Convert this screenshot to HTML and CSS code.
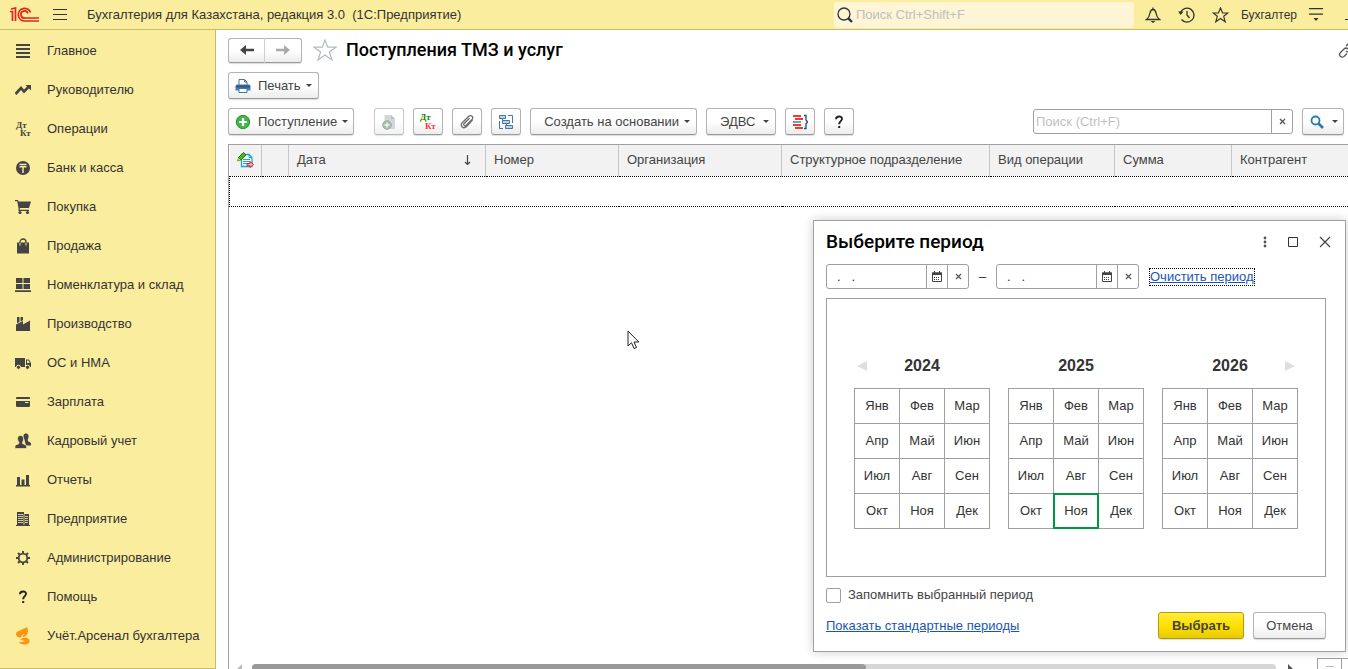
FILE: index.html
```html
<!DOCTYPE html>
<html lang="ru">
<head>
<meta charset="utf-8">
<title>Бухгалтерия для Казахстана</title>
<link rel="stylesheet" href="styles.css">
</head>
<body>
<div class="app">
  <header class="topbar">
    <svg class="logo" width="30" height="16" viewBox="0 0 30 16" fill="none" stroke="#e0241e" stroke-width="1.700"><path d="M0 4.500H2.500V14M1 2L5.500 1V14"/><path d="M20.500 5.500A6.300 6.300 0 1 0 15 14H29"/><path d="M17.800 6.500A3.500 3.500 0 1 0 15 11H29"/></svg>
    <button class="flat" aria-label="Меню"><svg width="14" height="12" viewBox="0 0 14 12" stroke="#333" stroke-width="1"><path d="M0 .5H14M0 5.500H14M0 10.500H14"/></svg></button>
    <div class="app-title">Бухгалтерия для Казахстана, редакция 3.0&nbsp; (1С:Предприятие)</div>
    <label class="global-search">
      <svg width="16" height="16" viewBox="0 0 16 16" fill="none" stroke="#333"><circle cx="7" cy="7" r="6" stroke-width="1.300"/><path d="M11.300 11.300L15 15" stroke-width="2.400"/></svg>
      <input type="text" placeholder="Поиск Ctrl+Shift+F" aria-label="Поиск">
    </label>
    <div class="top-tools">
      <button class="flat" aria-label="Уведомления"><svg width="16" height="16" viewBox="0 0 16 16" fill="none" stroke="#333" stroke-width="1.300"><path d="M1.500 12.500C4 10.500 4.500 9 5 6C5.500 3.500 6.500 2.500 8 2.500S10.500 3.500 11 6C11.500 9 12 10.500 14.500 12.500Z"/><path d="M8 .5V2.500"/><path d="M5.500 14H10.500L8 16Z" fill="#333" stroke="none"/></svg></button>
      <button class="flat" aria-label="История"><svg width="17" height="16" viewBox="0 0 17 16" fill="none" stroke="#333" stroke-width="1.300"><path d="M2.700 5A7 7 0 1 1 3.500 12.500"/><path d="M9 4V8L11.500 11"/><path d="M0 4.500H5.500L2.700 8Z" fill="#333" stroke="none"/></svg></button>
      <button class="flat" aria-label="Избранное"><svg width="17" height="16" viewBox="0 0 17 16" fill="none" stroke="#333" stroke-width="1.200"><path d="M8.500 1L10.600 6H15.800L11.700 9.300L13.200 14.800L8.500 11.600L3.800 14.800L5.300 9.300L1.200 6H6.400Z"/></svg></button>
      <button class="flat user">Бухгалтер</button>
      <button class="flat" aria-label="Настройки"><svg width="14" height="13" viewBox="0 0 14 13" fill="#333"><path d="M0 0H14V1.200H0ZM0 5.500H14V6.700H0ZM4.500 10H9.500L7 13Z"/></svg></button>
      <button class="flat minimize" aria-label="Свернуть"><svg width="12" height="12" viewBox="0 0 12 12"><path d="M0 10.500H12" stroke="#333"/></svg></button>
    </div>
  </header>

  <nav class="sidebar">
    <a class="nav-item" href="#"><svg viewBox="0 0 16 16"><path d="M1 1h14v2H1zM1 5h14v2H1zM1 9h14v2H1zM1 13h14v2H1z"/></svg>Главное</a>
    <a class="nav-item" href="#"><svg viewBox="0 0 16 16"><path d="M.5 12L6 6L9 9.500L14 4.500" fill="none" stroke="#444" stroke-width="2.600"/><path d="M10.500 3H16V8.500Z"/></svg>Руководителю</a>
    <a class="nav-item" href="#"><svg viewBox="0 0 16 16"><text x="1" y="7" font-size="9">Дт</text><text x="5" y="15" font-size="9">Кт</text></svg>Операции</a>
    <a class="nav-item" href="#"><svg viewBox="0 0 16 16"><circle cx="8" cy="8" r="7"/><path d="M4.500 4.500H11.500M4.500 6.800H11.500M8 6.500V13" stroke="#fbed9e" stroke-width="1.400"/></svg>Банк и касса</a>
    <a class="nav-item" href="#"><svg viewBox="0 0 16 16"><path d="M0 1H3L3.600 2.500H16L14 9H4.800V10.800H14V12H3.500V9L2.200 2.300H0Z"/><circle cx="5" cy="13.500" r="1.600"/><circle cx="12.500" cy="13.500" r="1.600"/></svg>Покупка</a>
    <a class="nav-item" href="#"><svg viewBox="0 0 16 16"><path d="M2 4.500H14V15.500H2Z"/><path d="M5 7V4A3 3 0 0 1 11 4V7" fill="none" stroke="#444" stroke-width="1.300"/><path d="M5 5V7.500M11 5V7.500" stroke="#fbed9e"/></svg>Продажа</a>
    <a class="nav-item" href="#"><svg viewBox="0 0 16 16"><path d="M1 1H7.500V6H1ZM8.500 1H15V6H8.500ZM1 7H7.500V12H1ZM8.500 7H15V12H8.500ZM0 13.200H16V15H0Z"/></svg>Номенклатура и склад</a>
    <a class="nav-item" href="#"><svg viewBox="0 0 16 16"><path d="M1 15V8.500L8 5V8.500L15 4.500V15ZM2 1H4.500V6L2 7.200ZM5.500 1H8V4.200L5.500 5.500Z"/></svg>Производство</a>
    <a class="nav-item" href="#"><svg viewBox="0 0 16 16"><path d="M0 3H10V12H0ZM11 4.500H14L16 8V12H11Z"/><path d="M12 5.500H13.500L14.800 8H12Z" fill="#fbed9e"/><g stroke="#fbed9e"><circle cx="3.500" cy="12.300" r="2.100"/><circle cx="12.500" cy="12.300" r="2.100"/></g></svg>ОС и НМА</a>
    <a class="nav-item" href="#"><svg viewBox="0 0 16 16"><path d="M1 4A1 1 0 0 1 2 3H14A1 1 0 0 1 15 4V5H1ZM1 7H15V12A1 1 0 0 1 14 13H2A1 1 0 0 1 1 12Z"/><path d="M10 8.500H13.500" stroke="#fbed9e"/></svg>Зарплата</a>
    <a class="nav-item" href="#"><svg viewBox="0 0 16 16"><path d="M10 9L9.500 6.500C7.500 3 8.500 .5 11 .5S14.500 3 12.800 6.500V8L16 10V12.500H11Z"/><path d="M0 15.500V12.500L4 10.500V9.500C1.500 6 2.500 2.500 5.500 2.500S9.500 6 7.500 9.500V10.500L11.500 12.500V15.500Z" stroke="#fbed9e" stroke-width=".7"/></svg>Кадровый учет</a>
    <a class="nav-item" href="#"><svg viewBox="0 0 16 16"><path d="M1 13H15V14.500H1ZM2 5H5V13H2ZM6.500 7.500H9.500V13H6.500ZM11 3H14V13H11Z"/></svg>Отчеты</a>
    <a class="nav-item" href="#"><svg viewBox="0 0 16 16"><path d="M2 1H9V3H14V14H15V15H1V14H2Z"/><path d="M3 3.500H8M3 5.500H8M3 7.500H8M3 9.500H8M3 11.500H8M10 5.500H13M10 7.500H13M10 9.500H13M10 11.500H13M9 3V14" stroke="#fbed9e" stroke-width=".8"/></svg>Предприятие</a>
    <a class="nav-item" href="#"><svg viewBox="0 0 16 16" fill="none" stroke="#444"><circle cx="8" cy="8" r="4.300" stroke-width="1.800"/><path d="M8 1V4M8 12V15M1 8H4M12 8H15M3 3L5 5M11 11L13 13M13 3L11 5M5 11L3 13" stroke-width="1.900"/></svg>Администрирование</a>
    <a class="nav-item" href="#"><svg viewBox="0 0 16 16" fill="none"><path d="M5 5.200C5 1.500 11.200 1.700 11 5C10.800 7.200 8.200 7.300 8.200 10.200" stroke="#222" stroke-width="1.900"/><path d="M7.200 12H9.200V14H7.200Z" fill="#222"/></svg>Помощь</a>
    <a class="nav-item" href="#"><svg class="leaf" viewBox="0 0 16 18"><path d="M12 0C13.500 3 13.500 7 10.500 9L7.500 10.500C7.500 9 8.500 8 9.500 6.500C7.500 7.500 6.500 9 6 10.500C3 10.500 .8 9 1 6.500C1.500 3.500 8 3 12 0Z"/><path d="M5.500 12.300C7.500 10.500 12 10 13.800 12C16 15 13 18 9 17.500C6.500 17.300 4.500 16.500 3.500 14.800C6 15.500 8.500 15.200 10.500 13.800C8.500 13.800 6.500 13.500 5.500 12.300Z"/></svg>Учёт.Арсенал бухгалтера</a>
  </nav>

  <main class="main">
    <div class="title-row">
      <div class="history">
        <button class="btn" aria-label="Назад"><svg width="16" height="12" viewBox="0 0 16 12" fill="#444"><path d="M1 6L7 1V4.700H15V7.300H7V11Z"/></svg></button>
        <button class="btn" aria-label="Вперед"><svg width="16" height="12" viewBox="0 0 16 12" fill="#aaa"><path d="M15 6L9 1V4.700H1V7.300H9V11Z"/></svg></button>
      </div>
      <button class="flat" aria-label="В избранное"><svg width="24" height="22" viewBox="0 0 24 22" fill="none" stroke="#b3bac4" stroke-width="1.200"><path d="M12 1L14.700 8.200H23L16.400 13L19 21L12 16L5 21L7.600 13L1 8.200H9.300Z"/></svg></button>
      <h1>Поступления ТМЗ и услуг</h1>
      <button class="flat link-btn" aria-label="Ссылка"><svg width="18" height="18" viewBox="0 0 18 18" fill="none" stroke="#555" stroke-width="1.300"><path d="M8 5L11 2C14 0 17 3 15.500 6L12 10C10.500 11 9 11 8 10M10 8C8.500 6.500 7 7 6 8L2.500 11.500C0 14 3 17.500 6 15.500L9 12.500"/></svg></button>
    </div>
    <div class="print-row">
      <button class="btn"><svg width="16" height="16" viewBox="0 0 16 16"><path d="M1.500 6.500H14.500L15.500 8V12.500H.500V8Z" fill="#4a7fae"/><path d="M4 7V1.500H9.500L12 4V7Z" fill="#fff" stroke="#46749e"/><path d="M9.500 1.500V4H12" fill="none" stroke="#46749e"/><path d="M1 7.500H15V9.500H1Z" fill="#2e5780"/><path d="M4 10.500H12V14.500H4Z" fill="#fff" stroke="#46749e"/></svg>Печать<span class="caret"></span></button>
    </div>
    <div class="toolbar">
      <button class="btn add"><svg width="16" height="16" viewBox="0 0 16 16"><circle cx="8" cy="8" r="6.700" fill="#43b649" stroke="#299134"/><path d="M8 4V12M4 8H12" stroke="#fff" stroke-width="2.200"/></svg>Поступление<span class="caret"></span></button>
      <button class="btn icon" disabled aria-label="Скопировать"><svg width="16" height="16" viewBox="0 0 16 16"><path d="M3.500 1H10L14 5V15H3.500Z" fill="#bfc7cd"/><path d="M10 1V5H14Z" fill="#98a3ad"/><circle cx="6" cy="11" r="4.300" fill="#84a388" stroke="#6f9173"/><path d="M6 8.500V13.500M3.500 11H8.500" stroke="#eee" stroke-width="1.400"/></svg></button>
      <button class="btn icon" aria-label="Проводки"><svg class="dtkt" width="18" height="18" viewBox="0 0 18 18"><text x="1" y="7" fill="#238000">Дт</text><text x="6" y="16" fill="#f33">Кт</text></svg></button>
      <button class="btn icon" aria-label="Присоединенные файлы"><svg width="16" height="16" viewBox="0 0 16 16" fill="none" stroke="#6b6b6b" stroke-width="1.300"><path d="M13.500 6L7.500 12.500C4.500 15.500 .5 12 3 9L9.500 2.500C12 .2 15.300 3 13 5.500L7 11.500C5.700 12.500 4 11 5 9.700L10.500 4.300"/></svg></button>
      <button class="btn icon" aria-label="Структура подчиненности"><svg width="16" height="16" viewBox="0 0 16 16" fill="#b9d3e7" stroke="#44789f"><path d="M1.500 1.500H7.500V4.500H1.500ZM4.500 6.500H11.500V9.500H4.500ZM7.500 11.500H14.500V14.500H7.500Z"/><path d="M10 1.500H14.500V9M4.500 4.500V6.500M8.500 9.500V11.500M1.500 7V14.500H5" fill="none"/></svg></button>
      <button class="btn based">Создать на основании<span class="caret"></span></button>
      <button class="btn edvs">ЭДВС<span class="caret"></span></button>
      <button class="btn icon" aria-label="Дополнительные реквизиты"><svg width="16" height="16" viewBox="0 0 16 16"><path d="M1 1H9V3H1ZM3 4H11V6H3ZM1 10H9V12H1ZM3 13H11V15H3Z" fill="#f23b2c"/><path d="M1 7H9V9H1Z" fill="#5fa7cf"/><path d="M12 1.500H14V6L15.500 8L14 10V14.500H12" fill="none" stroke="#1b4f80" stroke-width="1.300"/></svg></button>
      <button class="btn icon" aria-label="Справка"><svg width="16" height="16" viewBox="0 0 16 16" fill="none"><path d="M5 5.200C5 1.500 11.200 1.700 11 5C10.800 7.200 8.200 7.300 8.200 10.200" stroke="#222" stroke-width="1.900"/><path d="M7.200 12H9.200V14H7.200Z" fill="#222"/></svg></button>
      <div class="field list-search">
        <input type="text" placeholder="Поиск (Ctrl+F)" aria-label="Поиск в списке">
        <button aria-label="Очистить"><svg width="7" height="7" viewBox="0 0 7 7" stroke="#555" stroke-width="1.300"><path d="M1 1L6 6M6 1L1 6"/></svg></button>
      </div>
      <button class="btn find" aria-label="Найти"><svg width="14" height="14" viewBox="0 0 14 14" fill="none" stroke="#2e7ab0"><circle cx="5.500" cy="5.500" r="4" stroke-width="1.800"/><path d="M8.500 8.500L13 13" stroke-width="2.600"/></svg><span class="caret"></span></button>
    </div>

    <div class="list">
      <table>
        <colgroup><col class="c-mark"><col class="c-flag"><col class="c-date"><col class="c-num"><col class="c-org"><col class="c-dep"><col class="c-kind"><col class="c-sum"><col></colgroup>
        <thead>
          <tr>
            <th><svg width="18" height="16" viewBox="0 0 18 16"><path d="M4.500 2.500H12L15 5.500V14.500H4.500Z" fill="#fff" stroke="#19a5d8" stroke-width="1.300"/><path d="M12 2.500V5.500H15M6 7.500H13M6 9.500H13M6 11.500H10" fill="none" stroke="#19a5d8"/><path d="M1.500 5.500L6.500 .5L9 3L4 8Z" fill="#52b51e" stroke="#147a08"/><path d="M1.500 5.500L4 8L.5 9Z" fill="#ffe04a" stroke="#147a08" stroke-width=".6"/><path d="M10 11.500H13V9.500L16.500 12.500L13 15.500V13.700H10Z" fill="#ffb0b8" stroke="#e02032"/></svg></th>
            <th></th>
            <th><div class="sorted">Дата<svg width="7" height="11" viewBox="0 0 7 11" fill="none" stroke="#444"><path d="M3.500 0V9.500M1 7L3.500 9.500L6 7" stroke-width="1.200"/></svg></div></th>
            <th>Номер</th><th>Организация</th><th>Структурное подразделение</th><th>Вид операции</th><th>Сумма</th><th>Контрагент</th>
          </tr>
        </thead>
        <tbody><tr><td colspan="9"></td></tr></tbody>
      </table>
      <div class="list-foot">
        <svg width="6" height="10" viewBox="0 0 6 10" fill="#bbb"><path d="M5 0V10L0 5Z"/></svg>
        <div class="track"><div class="thumb"></div></div>
        <svg width="6" height="10" viewBox="0 0 6 10" fill="#555"><path d="M1 0V10L6 5Z"/></svg>
        <div class="jump"><button aria-label="В начало"><svg width="10" height="12" viewBox="0 0 10 12" stroke="#bbb" fill="none"><path d="M1 .5H9M5 12V3M2 6L5 3L8 6"/></svg></button><button aria-label="Вверх"></button></div>
      </div>
    </div>
  </main>

  <section class="dialog" role="dialog" aria-labelledby="dlg-title">
    <header class="dialog-head">
      <h2 id="dlg-title">Выберите период</h2>
      <button class="flat" aria-label="Еще"><svg width="4" height="12" viewBox="0 0 4 12" fill="#555"><circle cx="2" cy="2" r="1.400"/><circle cx="2" cy="6" r="1.400"/><circle cx="2" cy="10" r="1.400"/></svg></button>
      <button class="flat" aria-label="Развернуть"><svg width="10" height="10" viewBox="0 0 10 10" fill="none" stroke="#333"><path d="M.5 .5H9.500V9.500H.5Z"/></svg></button>
      <button class="flat" aria-label="Закрыть"><svg width="12" height="12" viewBox="0 0 12 12" stroke="#444" stroke-width="1.200"><path d="M1 1L11 11M11 1L1 11"/></svg></button>
    </header>
    <div class="range">
      <div class="field date">
        <input type="text" value=".   ." aria-label="Начало периода">
        <button aria-label="Календарь"><svg width="10" height="11" viewBox="0 0 10 11"><path d="M.5 2H9.500V10.500H.5Z" fill="#fff" stroke="#444"/><path d="M0 1.500H10V4H0ZM2 0H3V2H2ZM7 0H8V2H7Z" fill="#444"/><path d="M2 6.500H8M2 8.500H8" stroke="#444" stroke-dasharray="1 1"/></svg></button>
        <button aria-label="Очистить"><svg width="7" height="7" viewBox="0 0 7 7" stroke="#555" stroke-width="1.200"><path d="M1 1L6 6M6 1L1 6"/></svg></button>
      </div>
      <span class="dash">–</span>
      <div class="field date">
        <input type="text" value=".   ." aria-label="Конец периода">
        <button aria-label="Календарь"><svg width="10" height="11" viewBox="0 0 10 11"><path d="M.5 2H9.500V10.500H.5Z" fill="#fff" stroke="#444"/><path d="M0 1.500H10V4H0ZM2 0H3V2H2ZM7 0H8V2H7Z" fill="#444"/><path d="M2 6.500H8M2 8.500H8" stroke="#444" stroke-dasharray="1 1"/></svg></button>
        <button aria-label="Очистить"><svg width="7" height="7" viewBox="0 0 7 7" stroke="#555" stroke-width="1.200"><path d="M1 1L6 6M6 1L1 6"/></svg></button>
      </div>
      <a class="link focused" href="#">Очистить период</a>
    </div>
    <div class="calendar">
      <div class="year">
        <div class="year-head"><button class="flat" aria-label="Назад"><svg width="10" height="10" viewBox="0 0 10 10" fill="#dcdfe2"><path d="M10 0V10L0 5Z"/></svg></button><span>2024</span></div>
        <div class="months"><button>Янв</button><button>Фев</button><button>Мар</button><button>Апр</button><button>Май</button><button>Июн</button><button>Июл</button><button>Авг</button><button>Сен</button><button>Окт</button><button>Ноя</button><button>Дек</button></div>
      </div>
      <div class="year">
        <div class="year-head"><span>2025</span></div>
        <div class="months"><button>Янв</button><button>Фев</button><button>Мар</button><button>Апр</button><button>Май</button><button>Июн</button><button>Июл</button><button>Авг</button><button>Сен</button><button>Окт</button><button class="current">Ноя</button><button>Дек</button></div>
      </div>
      <div class="year">
        <div class="year-head"><span>2026</span><button class="flat next" aria-label="Вперед"><svg width="10" height="10" viewBox="0 0 10 10" fill="#dcdfe2"><path d="M0 0V10L10 5Z"/></svg></button></div>
        <div class="months"><button>Янв</button><button>Фев</button><button>Мар</button><button>Апр</button><button>Май</button><button>Июн</button><button>Июл</button><button>Авг</button><button>Сен</button><button>Окт</button><button>Ноя</button><button>Дек</button></div>
      </div>
    </div>
    <label class="remember"><input type="checkbox">Запомнить выбранный период</label>
    <footer class="dialog-foot">
      <a class="link" href="#">Показать стандартные периоды</a>
      <button class="btn primary">Выбрать</button>
      <button class="btn cancel">Отмена</button>
    </footer>
  </section>
  <svg class="cursor" width="13" height="20" viewBox="0 0 13 20" fill="#fff" stroke="#222"><path d="M1 1V16L4.500 12.800L7 18.500L9.500 17.500L7 12H11.800Z"/></svg>
</div>
</body>
</html>
```
FILE: styles.css
```css
* { box-sizing: border-box; }
body {
  margin: 0;
  font: 13px/16px "Liberation Sans", Arial, sans-serif;
  color: #333;
  background: #fff;
}
button, input { font: inherit; color: inherit; margin: 0; }
button { padding: 0; }
svg { display: block; flex: none; }
input::placeholder { color: #bfbfbf; opacity: 1; }

.app {
  position: relative;
  display: grid;
  grid-template: 30px minmax(0, 1fr) / 216px minmax(0, 1fr);
  height: 100vh;
  overflow: hidden;
}
.flat { display: flex; align-items: center; background: none; border: 0; }

.topbar {
  grid-column: 1 / -1;
  display: flex;
  align-items: center;
  padding-left: 10px;
  background: #fbed9e;
  border-bottom: 1px solid #c9bb68;
  overflow: hidden;
}
.logo { margin-right: 13px; }
.app-title { margin-left: 20px; white-space: nowrap; }
.global-search {
  display: flex;
  align-items: center;
  gap: 3px;
  width: 300px;
  height: 26px;
  margin-left: auto;
  padding-left: 3px;
  border-radius: 3px;
  background: #fdf5d5;
}
.global-search input { flex: 1; min-width: 0; padding: 0; border: 0; background: none; outline: 0; }
.top-tools { display: flex; align-items: center; margin-left: 11px; gap: 17px; }
.user { font-size: 12px; margin: 0 -5px 0 -5px; }
.minimize { width: 3px; margin-left: 5px; overflow: hidden; }

.sidebar {
  padding-top: 1px;
  background: #fbed9e;
  border-right: 1px solid #c9bb68;
  border-bottom: 1px solid #c9bb68;
  overflow: hidden;
}
.nav-item {
  display: flex;
  align-items: center;
  gap: 16px;
  height: 39px;
  padding-left: 15px;
  color: #333;
  text-decoration: none;
  white-space: nowrap;
}
.nav-item svg { width: 16px; height: 16px; fill: #444; font-weight: bold; font-family: "Liberation Serif", serif; }
.nav-item svg[fill="none"] { fill: none; }
.nav-item .leaf { height: 18px; fill: #ff9412; }

.main { display: flex; flex-direction: column; padding-left: 12px; min-width: 0; overflow: hidden; }
.title-row { display: flex; align-items: center; height: 26px; margin-top: 7px; }
.history { display: flex; margin-right: 11px; }
.history .btn { width: 37px; height: 25px; justify-content: center; padding: 0; }
.history .btn:first-child { border-radius: 3px 0 0 3px; border-right-color: #ccc; }
.history .btn:last-child { border-radius: 0 3px 3px 0; border-left: 0; }
h1, h2 { margin: 0; font: 500 18px/22px Roboto, "Liberation Sans", sans-serif; color: #000; }
h1 { margin-left: 9px; }
h2 { font-size: 19px; }
.link-btn { width: 10px; margin-left: auto; overflow: hidden; }
.print-row { display: flex; margin-top: 9px; }
.btn {
  display: flex;
  align-items: center;
  height: 27px;
  border: 1px solid #b4b4b4;
  border-bottom-color: #999;
  border-radius: 3px;
  background: linear-gradient(#fff 50%, #ececec);
  box-shadow: 0 1px 1px #ddd;
  color: #444;
  padding: 0 6px;
  white-space: nowrap;
}
.print-row .btn svg, .add svg { margin-right: 7px; }
.caret { border: 3px solid transparent; border-top-color: #444; border-bottom: 0; margin-left: 5px; }
.find .caret { margin-left: 8px; }
.toolbar { display: flex; align-items: center; gap: 9px; margin-top: 9px; padding-right: 4px; }
.toolbar .add { margin-right: 11px; padding-right: 5px; }
.btn.icon { width: 30px; justify-content: center; padding: 0; }
.btn:disabled { opacity: .7; }
.dtkt { font: bold 9px "Liberation Serif", serif; }
.based, .edvs { padding-left: 13px; }
.edvs .caret { margin-left: 8px; }
.field { display: flex; height: 25px; border: 1px solid #a0a0a0; border-radius: 3px; background: #fff; }
.field input { flex: 1; min-width: 0; padding: 0 2px; border: 0; background: none; outline: 0; }
.field button {
  display: flex;
  align-items: center;
  justify-content: center;
  width: 21px;
  border: 0;
  border-left: 1px solid #a0a0a0;
  background: none;
}
.list-search { width: 260px; margin-left: auto; }
.find { width: 42px; padding: 0 7px; }

.list { display: flex; flex-direction: column; flex: 1; min-height: 0; margin-top: 9px; border: solid #a0a0a0; border-width: 1px 0 0 1px; }
table { width: 100%; table-layout: fixed; border-collapse: collapse; }
th { height: 31px; padding: 0 8px; background: #f2f2f2; border-right: 1px solid #c6c6c6; font-weight: 400; color: #444; text-align: left; white-space: nowrap; }
th:first-child { padding: 0 7px; }
th:last-child { border-right: 0; }
td { height: 30px; padding: 0; border: 1px dotted #000; border-right: 0; }
.sorted { display: flex; align-items: center; justify-content: space-between; padding-right: 6px; }
.c-mark { width: 32px; } .c-flag { width: 27px; } .c-date { width: 197px; } .c-num { width: 133px; }
.c-org { width: 163px; } .c-dep { width: 208px; } .c-kind { width: 125px; } .c-sum { width: 117px; }
.list-foot { display: flex; align-items: flex-start; height: 11px; margin-top: auto; padding: 0 7px 0 8px; overflow: hidden; }
.list-foot > svg { margin-top: 6px; }
.track { flex: 1; height: 8px; margin: 6px 11px 0 9px; border-radius: 4px; background: #d6d6d6; }
.thumb { width: 60%; height: 8px; border-radius: 4px; background: #999; }
.jump { display: flex; margin-left: 24px; margin-right: -8px; }
.jump button { display: flex; justify-content: center; width: 25px; height: 25px; padding-top: 7px; border: 1px solid #a0a0a0; margin-right: -1px; background: #fff; }
.jump button:last-child { width: 9px; }

.dialog {
  position: absolute;
  right: 2px;
  bottom: 17px;
  width: 533px;
  padding: 10px 19px 12px 12px;
  border: 1px solid #a0a0a0;
  background: #fff;
  box-shadow: 0 0 10px #0003;
}
.dialog-head { display: flex; align-items: center; gap: 21px; margin-right: -5px; }
.dialog-head h2 { margin-right: auto; }
.range { display: flex; align-items: center; margin-top: 11px; }
.date { width: 143px; }
.date input { padding-left: 10px; }
.dash { width: 27px; text-align: center; }
.link { color: #1a56b0; text-decoration: underline; }
.focused { margin-left: 11px; outline: 1px dotted #000; }
.calendar { display: flex; justify-content: center; align-items: center; gap: 18px; height: 279px; margin-top: 9px; border: 1px solid #a0a0a0; padding-top: 9px; }
.year-head { display: grid; grid-template-columns: 1fr auto 1fr; align-items: center; height: 20px; margin-bottom: 12px; padding: 0 3px; font: bold 16px/20px "Liberation Sans", Arial, sans-serif; }
.year-head span { grid-column: 2; }
.next { justify-self: end; }
.months { display: grid; grid-template-columns: repeat(3, 44px); grid-auto-rows: 34px; gap: 1px; padding: 1px; background: #a0a0a0; }
.months button { border: 0; background: #fff; }
.months .current { outline: 2px solid #009646; outline-offset: -1px; }
.remember { display: flex; align-items: center; gap: 7px; margin-top: 10px; color: #444; }
.remember input { appearance: none; width: 15px; height: 15px; border: 1px solid #a0a0a0; border-radius: 2px; background: #fff; }
.dialog-foot { display: flex; align-items: center; gap: 9px; margin-top: 9px; }
.dialog-foot .link { margin-right: auto; }
.dialog-foot .btn { justify-content: center; }
.primary { width: 86px; border-color: #b09a10; background: linear-gradient(#ffec3d, #ffe000 50%, #e8cb00); font-weight: bold; }
.cancel { width: 73px; }
.cursor { position: absolute; left: 627px; top: 330px; }
```
